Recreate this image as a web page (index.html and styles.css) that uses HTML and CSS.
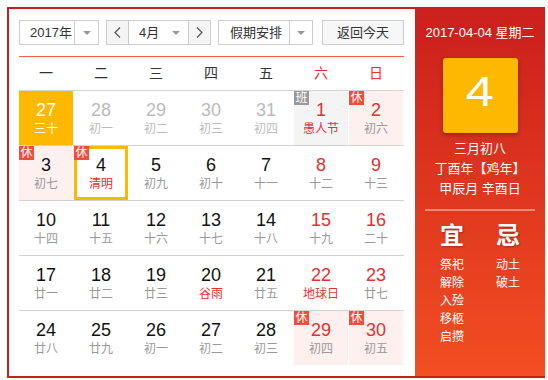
FILE: index.html
```html
<!DOCTYPE html>
<html lang="zh-CN">
<head>
<meta charset="utf-8">
<title>万年历</title>
<link rel="stylesheet" href="styles.css">
</head>
<body>
<div class="cal">
  <div class="main">
    <div class="toolbar">
      <div class="sel year">
        <span class="val">2017年</span>
        <span class="caretbox"><i class="caret"></i></span>
      </div>
      <div class="sel month">
        <span class="nav prev"><svg width="7" height="11" viewBox="0 0 7 11"><polyline points="6,0.5 1,5.5 6,10.5" fill="none" stroke="#555" stroke-width="1.2"/></svg></span>
        <span class="mval"><span>4月</span><i class="caret"></i></span>
        <span class="nav next"><svg width="7" height="11" viewBox="0 0 7 11"><polyline points="1,0.5 6,5.5 1,10.5" fill="none" stroke="#555" stroke-width="1.2"/></svg></span>
      </div>
      <div class="sel holiday">
        <span class="val">假期安排</span>
        <span class="caretbox"><i class="caret"></i></span>
      </div>
      <div class="btn">返回今天</div>
    </div>
    <div class="redline"></div>
    <div class="weekdays">
      <span>一</span><span>二</span><span>三</span><span>四</span><span>五</span><span class="we">六</span><span class="we">日</span>
    </div>
    <div class="week">
      <div class="cell sel-day"><span class="n">27</span><span class="l">三十</span></div>
      <div class="cell other"><span class="n">28</span><span class="l">初一</span></div>
      <div class="cell other"><span class="n">29</span><span class="l">初二</span></div>
      <div class="cell other"><span class="n">30</span><span class="l">初三</span></div>
      <div class="cell other"><span class="n">31</span><span class="l">初四</span></div>
      <div class="cell work we"><b class="badge gray">班</b><span class="n">1</span><span class="l fest">愚人节</span></div>
      <div class="cell rest we"><b class="badge">休</b><span class="n">2</span><span class="l">初六</span></div>
    </div>
    <div class="week">
      <div class="cell rest"><b class="badge">休</b><span class="n">3</span><span class="l">初七</span></div>
      <div class="cell today"><b class="badge">休</b><span class="n">4</span><span class="l fest">清明</span></div>
      <div class="cell"><span class="n">5</span><span class="l">初九</span></div>
      <div class="cell"><span class="n">6</span><span class="l">初十</span></div>
      <div class="cell"><span class="n">7</span><span class="l">十一</span></div>
      <div class="cell we"><span class="n">8</span><span class="l">十二</span></div>
      <div class="cell we"><span class="n">9</span><span class="l">十三</span></div>
    </div>
    <div class="week">
      <div class="cell"><span class="n">10</span><span class="l">十四</span></div>
      <div class="cell"><span class="n">11</span><span class="l">十五</span></div>
      <div class="cell"><span class="n">12</span><span class="l">十六</span></div>
      <div class="cell"><span class="n">13</span><span class="l">十七</span></div>
      <div class="cell"><span class="n">14</span><span class="l">十八</span></div>
      <div class="cell we"><span class="n">15</span><span class="l">十九</span></div>
      <div class="cell we"><span class="n">16</span><span class="l">二十</span></div>
    </div>
    <div class="week">
      <div class="cell"><span class="n">17</span><span class="l">廿一</span></div>
      <div class="cell"><span class="n">18</span><span class="l">廿二</span></div>
      <div class="cell"><span class="n">19</span><span class="l">廿三</span></div>
      <div class="cell"><span class="n">20</span><span class="l fest">谷雨</span></div>
      <div class="cell"><span class="n">21</span><span class="l">廿五</span></div>
      <div class="cell we"><span class="n">22</span><span class="l fest">地球日</span></div>
      <div class="cell we"><span class="n">23</span><span class="l">廿七</span></div>
    </div>
    <div class="week">
      <div class="cell"><span class="n">24</span><span class="l">廿八</span></div>
      <div class="cell"><span class="n">25</span><span class="l">廿九</span></div>
      <div class="cell"><span class="n">26</span><span class="l">初一</span></div>
      <div class="cell"><span class="n">27</span><span class="l">初二</span></div>
      <div class="cell"><span class="n">28</span><span class="l">初三</span></div>
      <div class="cell rest we"><b class="badge">休</b><span class="n">29</span><span class="l">初四</span></div>
      <div class="cell rest we"><b class="badge">休</b><span class="n">30</span><span class="l">初五</span></div>
    </div>
  </div>
  <div class="side">
    <div class="date">2017-04-04 星期二</div>
    <div class="big"><span>4</span></div>
    <div class="lunar">
      <p>三月初八</p>
      <p>丁酉年【鸡年】</p>
      <p>甲辰月 辛酉日</p>
    </div>
    <div class="sep"></div>
    <div class="yj">
      <div class="col">
        <h3>宜</h3>
        <p>祭祀</p><p>解除</p><p>入殓</p><p>移柩</p><p>启攒</p>
      </div>
      <div class="col">
        <h3>忌</h3>
        <p>动土</p><p>破土</p>
      </div>
    </div>
  </div>
</div>
</body>
</html>
```

FILE: styles.css
```css
* { box-sizing: border-box; margin: 0; padding: 0; }
body {
  margin: 0;
  background: #fff;
  font-family: "Liberation Sans", "Noto Sans CJK SC", sans-serif;
  color: #333;
}
.cal {
  margin: 7px 0 0 7px;
  width: 538px;
  height: 371px;
  display: flex;
  border: 2px solid #c91e1e;
  border-right: none;
}
.main {
  width: 406px;
  padding: 11px 0 0 10px;
}
.toolbar {
  display: flex;
  height: 25px;
}
.sel {
  display: flex;
  border: 1px solid #ccc;
  background: #fff;
  font-size: 13px;
  line-height: 23px;
  color: #333;
}
.val { padding-left: 10px; }
.year { width: 80px; }
.year .val { width: 54px; }
.caretbox {
  flex: 1;
  border-left: 1px solid #ccc;
  display: flex;
  align-items: center;
  justify-content: center;
}
.caret {
  display: block;
  width: 0;
  height: 0;
  border-left: 4px solid transparent;
  border-right: 4px solid transparent;
  border-top: 4px solid #999;
}
.month { width: 105px; margin-left: 7px; }
.nav {
  width: 22px;
  background: #f5f5f5;
  display: flex;
  align-items: center;
  justify-content: center;
}
.nav svg { display: block; }
.prev { border-right: 1px solid #ccc; }
.next { border-left: 1px solid #ccc; }
.mval {
  flex: 1;
  display: flex;
  align-items: center;
  justify-content: space-between;
  padding: 0 8px 0 10px;
}
.holiday { width: 95px; margin-left: 7px; }
.holiday .val { width: 70px; padding-left: 11px; }
.btn {
  width: 82px;
  margin-left: 9px;
  border: 1px solid #ccc;
  background: #f7f7f7;
  font-size: 13px;
  line-height: 23px;
  text-align: center;
  color: #333;
}
.redline {
  margin-top: 11px;
  width: 385px;
  height: 1px;
  background: #f05b4b;
}
.weekdays {
  display: grid;
  grid-template-columns: repeat(7, 54px);
  column-gap: 1px;
  height: 33px;
  line-height: 33px;
  font-size: 14px;
  text-align: center;
  color: #333;
}
.weekdays .we { color: #e3302e; }
.week {
  display: grid;
  grid-template-columns: repeat(7, 54px);
  column-gap: 1px;
  width: 385px;
  border-top: 1px solid #d3d3d3;
}
.cell {
  position: relative;
  height: 54px;
  padding-top: 9px;
  text-align: center;
}
.n {
  display: block;
  font-size: 18px;
  line-height: 20px;
  color: #111;
}
.l {
  display: block;
  font-size: 12px;
  line-height: 18px;
  color: #999;
}
.we .n { color: #e3302e; }
.l.fest { color: #e3302e; }
.other .n, .other .l { color: #bbb; }
.sel-day { background: #fcb900; }
.sel-day .n, .sel-day .l { color: #fff; }
.rest { background: #fdf0ef; }
.work { background: #f4f4f4; }
.today {
  border: 3px solid #fcb900;
  padding-top: 6px;
}
.badge {
  position: absolute;
  top: 0;
  left: 0;
  width: 15px;
  height: 14px;
  background: #f44b3b;
  color: #fff;
  font-size: 12px;
  line-height: 14px;
  font-weight: normal;
  text-align: center;
}
.badge.gray { background: #999; }
.today .badge { top: -3px; left: -3px; }
.side {
  width: 130px;
  background: linear-gradient(#ca1f1c, #f24f22);
  color: #fff;
  text-align: center;
  padding-top: 15px;
}
.date {
  font-size: 13px;
  line-height: 18px;
}
.big {
  width: 75px;
  height: 75px;
  margin: 16px auto 0;
  background: #fcb900;
  border-radius: 3px;
  box-shadow: 0 2px 4px rgba(0, 0, 0, 0.25);
  font-size: 42px;
  line-height: 68px;
}
.big span {
  display: inline-block;
  transform: scaleX(1.2);
}
.lunar {
  margin-top: 6px;
  font-size: 13px;
  line-height: 20px;
}
.sep {
  margin: 10px 10px 0;
  height: 2px;
  background: rgba(255, 255, 255, 0.4);
}
.yj {
  display: flex;
  justify-content: center;
  margin-top: 10px;
}
.col { width: 56px; }
.col h3 {
  font-size: 24px;
  line-height: 30px;
  font-weight: bold;
  text-shadow: 1px 1px 2px rgba(0, 0, 0, 0.3);
  margin-bottom: 5px;
}
.col p {
  font-size: 12px;
  line-height: 18px;
}
```
